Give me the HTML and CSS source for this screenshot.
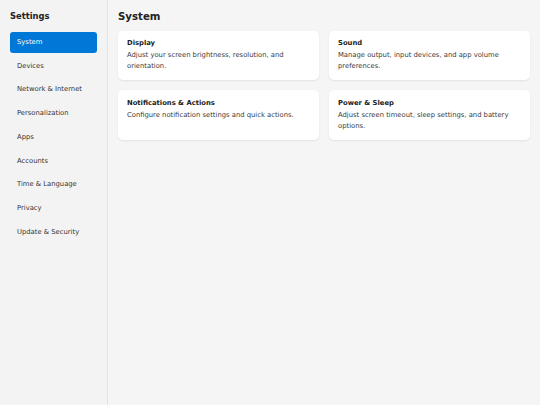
FILE: index.html
```html
<!DOCTYPE html>
<html>
<head>
<meta charset="utf-8">
<link rel="stylesheet" href="styles.css">
</head>
<body>
<div class="app">
  <aside class="sidebar">
    <h1 class="brand">Settings</h1>
    <nav class="nav">
      <a class="nav-item active">System</a>
      <a class="nav-item">Devices</a>
      <a class="nav-item">Network &amp; Internet</a>
      <a class="nav-item">Personalization</a>
      <a class="nav-item">Apps</a>
      <a class="nav-item">Accounts</a>
      <a class="nav-item">Time &amp; Language</a>
      <a class="nav-item">Privacy</a>
      <a class="nav-item">Update &amp; Security</a>
    </nav>
  </aside>
  <main class="main">
    <h2 class="page-title">System</h2>
    <div class="grid">
      <div class="card">
        <div class="card-title">Display</div>
        <div class="card-desc">Adjust your screen brightness, resolution, and orientation.</div>
      </div>
      <div class="card">
        <div class="card-title">Sound</div>
        <div class="card-desc">Manage output, input devices, and app volume preferences.</div>
      </div>
      <div class="card">
        <div class="card-title">Notifications &amp; Actions</div>
        <div class="card-desc">Configure notification settings and quick actions.</div>
      </div>
      <div class="card">
        <div class="card-title">Power &amp; Sleep</div>
        <div class="card-desc">Adjust screen timeout, sleep settings, and battery options.</div>
      </div>
    </div>
  </main>
</div>
</body>
</html>
```
FILE: styles.css
```css
* { box-sizing: border-box; }
html, body { margin: 0; padding: 0; height: 100%; }
body {
  font-family: "DejaVu Sans", Verdana, sans-serif;
  color: #222;
  background: #f5f5f5;
}
.app { display: flex; height: 405px; }
.sidebar {
  width: 108px;
  flex: none;
  background: #f3f3f3;
  border-right: 1px solid #e2e2e2;
  padding: 10px 10px;
}
.brand {
  margin: 0 0 10px 0;
  font-size: 8.4px;
  font-weight: bold;
  line-height: 12px;
  color: #222;
}
.nav { display: flex; flex-direction: column; gap: 3px; }
.nav-item {
  display: block;
  font-size: 6.8px;
  line-height: 9px;
  padding: 6.1px 7px 5.6px;
  border-radius: 3px;
  color: #333;
}
.nav-item.active { background: #0078d7; color: #fff; }
.main { flex: 1; padding: 10px 10px; background: #f5f5f5; }
.page-title {
  margin: 0 0 6.5px 0;
  font-size: 10.2px;
  font-weight: bold;
  line-height: 14px;
  color: #222;
}
.grid {
  display: grid;
  grid-template-columns: 1fr 1fr;
  gap: 10px 10px;
}
.card {
  background: #fff;
  border-radius: 5px;
  padding: 8.5px 9px 8px;
  min-height: 48.5px;
  box-shadow: 0 1px 2px rgba(0,0,0,0.08);
}
.card-title {
  font-size: 6.8px;
  font-weight: bold;
  line-height: 9px;
  color: #222;
  margin-bottom: 2px;
}
.card-desc {
  font-size: 6.8px;
  line-height: 11px;
  color: #3a3a3a;
}
```
